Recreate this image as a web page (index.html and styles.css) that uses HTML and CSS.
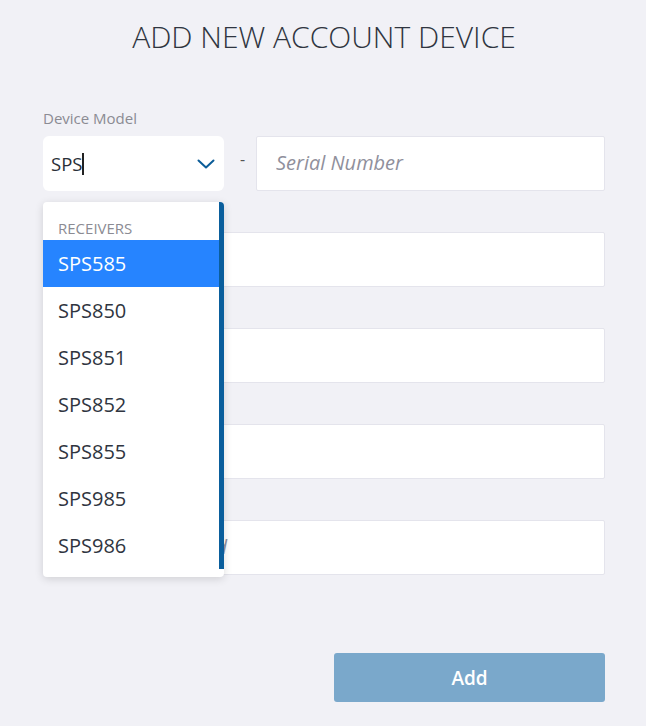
FILE: index.html
```html
<!DOCTYPE html>
<html>
<head>
<meta charset="utf-8">
<link rel="stylesheet" href="styles.css">
</head>
<body>
<div class="page">
  <h1 class="title">ADD NEW ACCOUNT DEVICE</h1>
  <form class="form">
    <div class="field">
      <label class="label">Device Model</label>
      <div class="model-row">
        <div class="select-wrap">
          <div class="select">
            <span class="select-value">SPS</span><span class="cursor"></span>
            <svg class="chevron" width="18" height="10" viewBox="0 0 18 10"><path d="M1.5 1.5 L9 8.5 L16.5 1.5" fill="none" stroke="#0b5c98" stroke-width="2" stroke-linecap="round" stroke-linejoin="round"/></svg>
          </div>
          <div class="menu">
            <div class="menu-group">Receivers</div>
            <div class="menu-item active">SPS585</div>
            <div class="menu-item">SPS850</div>
            <div class="menu-item">SPS851</div>
            <div class="menu-item">SPS852</div>
            <div class="menu-item">SPS855</div>
            <div class="menu-item">SPS985</div>
            <div class="menu-item">SPS986</div>
            <div class="menu-scroll"></div>
          </div>
        </div>
        <span class="dash">-</span>
        <input class="input grow" type="text" placeholder="Serial Number">
      </div>
    </div>
    <div class="field plain">
      <input class="input" type="text">
    </div>
    <div class="field plain">
      <input class="input" type="text">
    </div>
    <div class="field plain">
      <input class="input" type="text">
    </div>
    <div class="field plain">
      <input class="input" type="text" placeholder="Re-Enter Password">
    </div>
    <div class="actions">
      <button class="btn" type="button">Add</button>
    </div>
  </form>
</div>
</body>
</html>
```
FILE: styles.css
```css
* { box-sizing: border-box; }
body {
  margin: 0;
  background: #f1f1f6;
  font-family: "Open Sans", "Noto Sans", sans-serif;
  color: #333a44;
}
.page {
  padding: 16px 41px 0 43px;
}
.title {
  margin: 0;
  font-size: 30px;
  line-height: 41px;
  font-weight: 300;
  color: #2f3540;
  text-align: center;
}
.form {
  margin-top: 51px;
  display: flex;
  flex-direction: column;
}
.field {
  display: flex;
  flex-direction: column;
  margin-bottom: 14px;
}
.field.plain {
  padding-top: 27px;
}
.label {
  font-size: 15px;
  line-height: 20px;
  color: #8b8b93;
  margin-bottom: 8px;
}
.model-row {
  display: flex;
  align-items: center;
}
.select-wrap {
  position: relative;
  width: 181px;
  flex: none;
}
.select {
  height: 55px;
  background: #fff;
  border-radius: 6px;
  display: flex;
  align-items: center;
  padding: 0 9px 0 8px;
}
.select-value {
  font-size: 18.5px;
  color: #2a2f38;
}
.cursor {
  width: 2px;
  height: 22px;
  background: #222;
}
.chevron {
  margin-left: auto;
}
.dash {
  width: 32px;
  padding-left: 5px;
  text-align: center;
  font-size: 16px;
  color: #555;
  margin-top: -9px;
  flex: none;
}
.input {
  width: 100%;
  height: 55px;
  background: #fff;
  border: 1px solid #e4e4ec;
  border-radius: 2px;
  padding: 0 19px 3px;
  font-family: inherit;
  font-size: 20px;
  color: #333;
  outline: none;
}
.input.grow {
  flex: 1;
}
.input::placeholder {
  color: #90909c;
  font-style: italic;
}
.menu {
  position: absolute;
  top: 66px;
  left: 0;
  width: 181px;
  height: 375px;
  background: #fff;
  border-radius: 4px;
  box-shadow: 0 2px 8px rgba(0, 0, 0, 0.14);
  padding-top: 14px;
  z-index: 5;
  overflow: hidden;
}
.menu-group {
  font-size: 15px;
  line-height: 24px;
  text-transform: uppercase;
  color: #8b8b93;
  padding-left: 15px;
}
.menu-item {
  height: 47px;
  line-height: 47px;
  font-size: 20px;
  padding-left: 15px;
  color: #2f3540;
}
.menu-item.active {
  background: #2684ff;
  color: #fff;
}
.menu-scroll {
  position: absolute;
  top: 0;
  right: 0;
  width: 5px;
  height: 367px;
  background: #0a5e9c;
}
.actions {
  display: flex;
  justify-content: flex-end;
  margin-top: 64px;
}
.btn {
  width: 271px;
  height: 49px;
  background: #7aa8cb;
  border: none;
  border-radius: 3px;
  color: #fff;
  font-family: inherit;
  font-size: 19px;
  font-weight: 600;
}
```
